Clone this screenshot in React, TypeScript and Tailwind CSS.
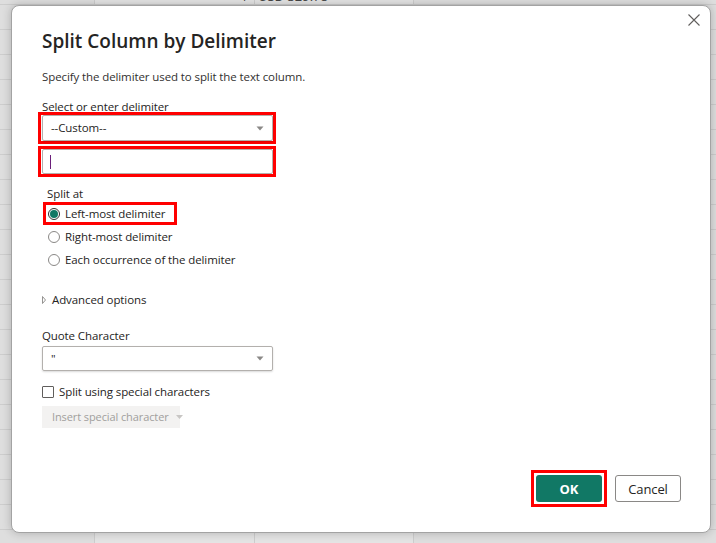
import type { FC, ReactNode } from 'react';

const rows = Array.from({ length: 22 });

const Sheet: FC = () => (
  <div className="flex flex-col">
    <div className="flex h-[18px] -mt-[13px] border-b border-[#cdcdcd] text-[13px] leading-[18px] text-[#444]">
      <div className="w-[95px] border-r border-[#cdcdcd] bg-[#dedede]" />
      <div className="w-[160px] border-r border-[#cdcdcd] pr-[6px] text-right">1</div>
      <div className="w-[159px] border-r border-[#cdcdcd] pl-[3px]">USD 329.78</div>
      <div className="flex-1 bg-[#dedede]" />
    </div>
    {rows.map((_, i) => (
      <div key={i} className="flex h-[25px] border-b border-[#cdcdcd] text-[13px] leading-[25px] text-[#444]">
        <div className="w-[95px] border-r border-[#cdcdcd] bg-[#dedede]" />
        <div className="w-[160px] border-r border-[#cdcdcd] pr-[6px] text-right">{i === 20 ? '1' : ''}</div>
        <div className="w-[159px] border-r border-[#cdcdcd] pl-[3px]">{i === 20 ? 'USD 711.55' : ''}</div>
        <div className="flex-1 bg-[#dedede]" />
      </div>
    ))}
  </div>
);

const Caret: FC = () => (
  <svg width="8" height="5" viewBox="0 0 8 5" className="shrink-0">
    <path d="M0.5 0.5 L7.5 0.5 L4 4.5 Z" fill="#8a8886" />
  </svg>
);

const Highlight: FC<{ className?: string; children: ReactNode }> = ({ className, children }) => (
  <div className={`border-[3px] border-[#ff0000] ${className ?? ''}`}>{children}</div>
);

const Radio: FC<{ checked?: boolean; label: string }> = ({ checked, label }) => (
  <label className="flex h-[23px] items-center gap-[5px]">
    <span
      className={`flex h-[12px] w-[12px] items-center justify-center rounded-full border ${
        checked ? 'border-[#323130]' : 'border-[#8a8886]'
      } bg-white`}
    >
      {checked && <span className="h-[8px] w-[8px] rounded-full bg-[#117865]" />}
    </span>
    <span>{label}</span>
  </label>
);

const App: FC = () => {
  return (
    <div className="relative h-[543px] w-[716px] overflow-hidden bg-[#e4e4e4] font-['Open_Sans',sans-serif]">
      <Sheet />

      <div className="absolute left-[11px] top-[5px] h-[528px] w-[700px] rounded-[8px] border border-[#a3a3a3] bg-white text-[11.5px] leading-[16px] tracking-[-0.1px] text-[#252423] shadow-[0_0_10px_rgba(0,0,0,0.22)]">
        <button className="absolute right-[10px] top-[8px] p-0" aria-label="Close">
          <svg width="12" height="12" viewBox="0 0 12 12">
            <path d="M0.5 0.5 L11.5 11.5 M11.5 0.5 L0.5 11.5" stroke="#605e5c" strokeWidth="1.1" />
          </svg>
        </button>

        <div className="flex flex-col pl-[30px] pt-[21px]">
          <h1 className="text-[19px] font-semibold leading-[28px] tracking-normal text-[#252423]">Split Column by Delimiter</h1>
          <p className="mt-[14px] text-[#323130]">Specify the delimiter used to split the text column.</p>

          <div className="mt-[15px] leading-[14px]">Select or enter delimiter</div>
          <Highlight className="-ml-[4px] -mt-[2px] w-[238px] pl-[1px]">
            <div className="flex h-[26px] items-center justify-between rounded-[2px] border border-[#b3b0ad] pl-[8px] pr-[8px] shadow-[0_1px_2px_rgba(0,0,0,0.15)]">
              <span>--Custom--</span>
              <Caret />
            </div>
          </Highlight>
          <Highlight className="-ml-[4px] mt-[2px] w-[238px] pl-[1px]">
            <div className="flex h-[25px] items-center rounded-[2px] border border-[#b3b0ad] pl-[7px]">
              <span className="h-[14px] w-[1px] bg-[#6b1f7a]" />
            </div>
          </Highlight>

          <div className="ml-[5px] mt-[9px]">Split at</div>
          <Highlight className="ml-[1px] w-[134px] pl-[2px]">
            <div className="-my-[3px]">
              <Radio checked label="Left-most delimiter" />
            </div>
          </Highlight>
          <div className="ml-[6px]">
            <Radio label="Right-most delimiter" />
            <Radio label="Each occurrence of the delimiter" />
          </div>

          <div className="mt-[21px] flex items-center gap-[6px]">
            <svg width="4" height="8" viewBox="0 0 4 8">
              <path d="M0.5 0.5 L3.5 4 L0.5 7.5 Z" fill="none" stroke="#8a8886" strokeWidth="0.9" />
            </svg>
            <span>Advanced options</span>
          </div>

          <div className="mt-[20px]">Quote Character</div>
          <div className="mt-[2px] flex h-[25px] w-[231px] items-center justify-between rounded-[2px] border border-[#b3b0ad] pl-[8px] pr-[8px] shadow-[0_1px_2px_rgba(0,0,0,0.15)]">
            <span>"</span>
            <Caret />
          </div>

          <label className="mt-[13px] flex items-center gap-[5px]">
            <span className="h-[12px] w-[12px] rounded-[1px] border border-[#605e5c] bg-white" />
            <span>Split using special characters</span>
          </label>
          <div className="mt-[6px] flex h-[22px] w-[138px] items-center gap-[7px] whitespace-nowrap bg-[#f3f2f1] pl-[10px] text-[11px] text-[#a19f9d]">
            <span>Insert special character</span>
            <svg width="7" height="4" viewBox="0 0 7 4" className="shrink-0">
              <path d="M0 0 L7 0 L3.5 4 Z" fill="#c8c6c4" />
            </svg>
          </div>
        </div>

        <div className="absolute bottom-[25px] right-[29px] flex items-center gap-[8px]">
          <Highlight className="p-[2px]">
            <button className="flex h-[27px] w-[66px] items-center justify-center rounded-[3px] bg-[#117865] text-[13px] font-bold text-white">
              OK
            </button>
          </Highlight>
          <button className="flex h-[27px] w-[66px] items-center justify-center rounded-[3px] border border-[#8a8886] bg-white text-[13px] text-[#252423]">
            Cancel
          </button>
        </div>
      </div>
    </div>
  );
};

export default App;
